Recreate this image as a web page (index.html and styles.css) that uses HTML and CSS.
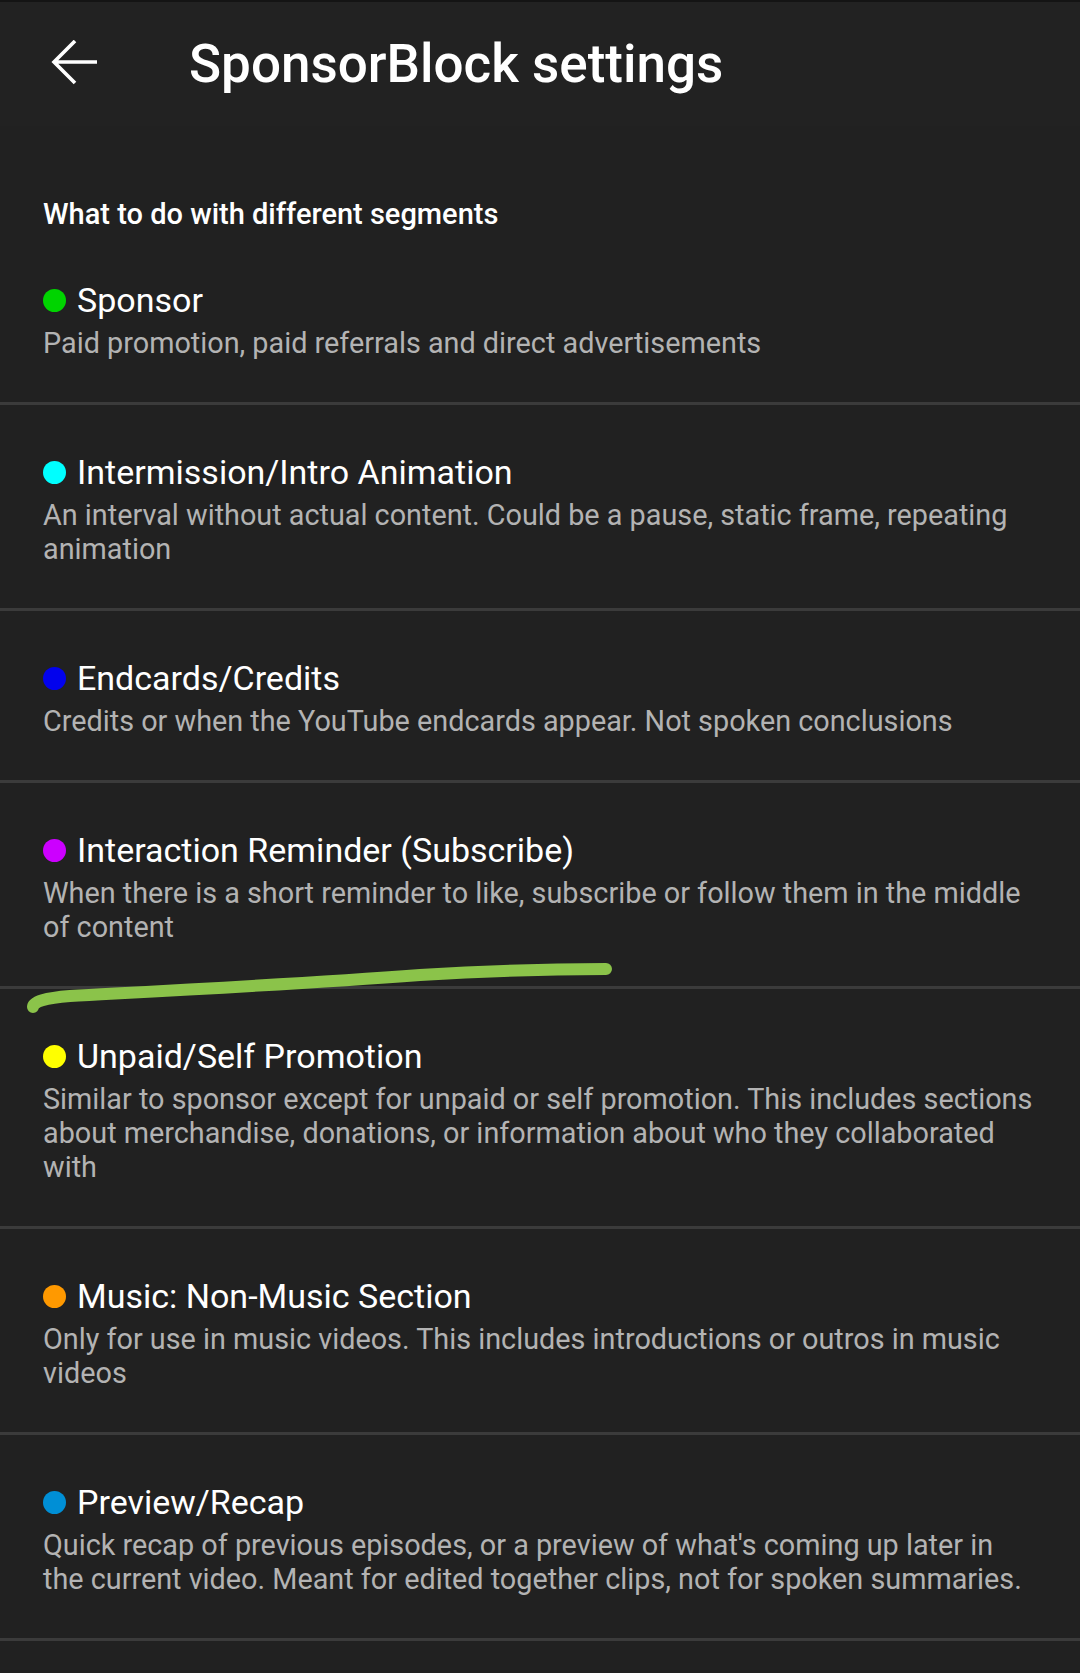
FILE: index.html
```html
<!DOCTYPE html>
<html>
<head>
<meta charset="utf-8">
<link rel="stylesheet" href="styles.css">
</head>
<body>
<div class="screen">
  <header class="toolbar">
    <svg class="back" viewBox="0 0 48 48" width="48" height="48"><path d="M3 22H46M24 1L3 22L24 43" fill="none" stroke="#fff" stroke-width="3.6" stroke-linecap="butt" stroke-linejoin="miter"/></svg>
    <h1 class="title">SponsorBlock settings</h1>
  </header>
  <main class="list">
    <div class="section">What to do with different segments</div>
    <div class="item first">
      <div class="item-title"><span class="dot" style="background:#00d400"></span>Sponsor</div>
      <div class="item-desc">Paid promotion, paid referrals and direct advertisements</div>
    </div>
    <div class="item">
      <div class="item-title"><span class="dot" style="background:#00ffff"></span>Intermission/Intro Animation</div>
      <div class="item-desc">An interval without actual content. Could be a pause, static frame, repeating animation</div>
    </div>
    <div class="item">
      <div class="item-title"><span class="dot" style="background:#0202ed"></span>Endcards/Credits</div>
      <div class="item-desc">Credits or when the YouTube endcards appear. Not spoken conclusions</div>
    </div>
    <div class="item">
      <div class="item-title"><span class="dot" style="background:#cc00ff"></span>Interaction Reminder (Subscribe)</div>
      <div class="item-desc">When there is a short reminder to like, subscribe or follow them in the middle of content</div>
    </div>
    <div class="item">
      <div class="item-title"><span class="dot" style="background:#ffff00"></span>Unpaid/Self Promotion</div>
      <div class="item-desc">Similar to sponsor except for unpaid or self promotion. This includes sections about merchandise, donations, or information about who they collaborated with</div>
    </div>
    <div class="item">
      <div class="item-title"><span class="dot" style="background:#ff9900"></span>Music: Non-Music Section</div>
      <div class="item-desc">Only for use in music videos. This includes introductions or outros in music videos</div>
    </div>
    <div class="item">
      <div class="item-title"><span class="dot" style="background:#008fd6"></span>Preview/Recap</div>
      <div class="item-desc">Quick recap of previous episodes, or a preview of what's coming up later in the current video. Meant for edited together clips, not for spoken summaries.</div>
    </div>
    <div class="item"></div>
  </main>
  <svg class="scribble" width="1080" height="1673" viewBox="0 0 1080 1673">
    <path d="M33 1007 Q33 999 70 996 C200 989 300 984 420 975 C500 970 560 969 606 969" fill="none" stroke="#8bc34a" stroke-width="12" stroke-linecap="round"/>
  </svg>
</div>
</body>
</html>
```
FILE: styles.css
```css
html, body {
  margin: 0;
  padding: 0;
  background: #212121;
}
.screen {
  position: relative;
  width: 1080px;
  height: 1673px;
  overflow: hidden;
  background: #212121;
  font-family: Roboto, "Noto Sans", sans-serif;
  color: #fff;
}
.toolbar {
  height: 124px;
  background: #222222;
  border-top: 2px solid #141414;
  display: flex;
  align-items: center;
}
.back {
  margin-left: 51px;
  width: 48px;
  height: 48px;
}
.title {
  margin: 0 0 0 90px;
  font-size: 53px;
  font-weight: 500;
  letter-spacing: 0;
}
.list {
  display: flex;
  flex-direction: column;
}
.section {
  padding: 72px 43px 0;
  font-size: 29px;
  font-weight: 500;
  line-height: 32px;
}
.item {
  border-top: 3px solid #3b3b3b;
  padding: 47px 43px 42px 43px;
}
.item.first {
  border-top: none;
  padding-top: 50px;
}
.item-title {
  display: flex;
  align-items: center;
  font-size: 34px;
  line-height: 40px;
}
.dot {
  width: 23px;
  height: 23px;
  border-radius: 50%;
  margin-right: 11px;
  flex: none;
}
.item-desc {
  margin-top: 6px;
  font-size: 28.8px;
  line-height: 34px;
  color: #b3b3b3;
}
.scribble {
  position: absolute;
  left: 0;
  top: 0;
  pointer-events: none;
}
```
